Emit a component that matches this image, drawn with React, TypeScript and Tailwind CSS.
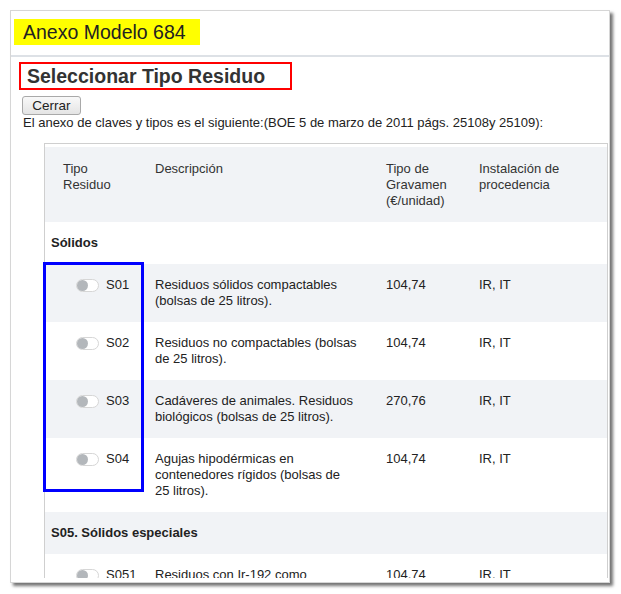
type Row =
  | { kind: "section"; title: string }
  | { kind: "item"; code: string; desc: string[]; rate: string; origin: string };

const rows: Row[] = [
  { kind: "section", title: "Sólidos" },
  { kind: "item", code: "S01", desc: ["Residuos sólidos compactables", "(bolsas de 25 litros)."], rate: "104,74", origin: "IR, IT" },
  { kind: "item", code: "S02", desc: ["Residuos no compactables (bolsas", "de 25 litros)."], rate: "104,74", origin: "IR, IT" },
  { kind: "item", code: "S03", desc: ["Cadáveres de animales. Residuos", "biológicos (bolsas de 25 litros)."], rate: "270,76", origin: "IR, IT" },
  { kind: "item", code: "S04", desc: ["Agujas hipodérmicas en", "contenedores rígidos (bolsas de", "25 litros)."], rate: "104,74", origin: "IR, IT" },
  { kind: "section", title: "S05. Sólidos especiales" },
  { kind: "item", code: "S051", desc: ["Residuos con Ir-192 como", "fuente encapsulada (bolsas de", "25 litros)."], rate: "104,74", origin: "IR, IT" },
];

function Toggle() {
  return (
    <span className="flex items-center w-[23px] h-[13px] rounded-full border border-[#d6d6d6] bg-white">
      <span className="w-[11px] h-[11px] rounded-full bg-[#b3b7bb]" />
    </span>
  );
}

export default function App() {
  return (
    <div className="relative w-[621px] h-[594px] bg-white overflow-hidden font-['Liberation_Sans',Arial,sans-serif] text-[#222]">
      <div className="absolute left-[10px] top-[10px] w-[600px] h-[573px] flex flex-col bg-white border border-[#d6d6d6] pb-[4px] shadow-[3px_3px_3px_rgba(0,0,0,0.55)]">
        {/* cabecera */}
        <div className="h-[46px] shrink-0 border-b-2 border-[#dde1e6]">
          <div className="ml-[3px] mt-[8px] w-[186px] h-[26px] bg-[#ffff00] pl-[9px] text-[19.5px] leading-[26px] text-[#222]">
            Anexo Modelo 684
          </div>
        </div>

        <div className="flex-1 min-h-0 overflow-hidden pl-[8px]">
          <div className="mt-[5px] w-[273px] h-[28px] border-2 border-[#ff0000] pl-[6px] text-[19.5px] leading-[24px] font-bold text-[#333]">
            Seleccionar Tipo Residuo
          </div>
          <button className="mt-[6px] ml-[3px] block w-[59px] h-[19px] rounded-[3px] border border-[#a9a9a9] bg-gradient-to-b from-[#f9f9f9] to-[#e4e4e4] text-[13.5px] leading-[16px] text-[#222]">
            Cerrar
          </button>
          <p className="ml-[4px] text-[13px] leading-[16px] text-[#222]">
            El anexo de claves y tipos es el siguiente:(BOE 5 de marzo de 2011 págs. 25108y 25109):
          </p>

          <div className="mt-[12px] ml-[25px] mr-[1px] border-t border-l border-r border-[#cfcfcf] pt-[3px]">
            <table className="w-full table-fixed border-collapse text-[13px] leading-[16px] text-left">
              <colgroup>
                <col className="w-[100px]" />
                <col className="w-[231px]" />
                <col className="w-[93px]" />
                <col />
              </colgroup>
              <thead>
                <tr className="bg-[#f1f3f6] align-top text-[#333]">
                  <th className="font-normal pl-[18px] pt-[14px] pb-[13px]">Tipo<br />Residuo</th>
                  <th className="font-normal pl-[10px] pt-[14px] pb-[13px]">Descripción</th>
                  <th className="font-normal pl-[10px] pt-[14px] pb-[13px]">Tipo de<br />Gravamen<br />(€/unidad)</th>
                  <th className="font-normal pl-[10px] pt-[14px] pb-[13px]">Instalación de<br />procedencia</th>
                </tr>
              </thead>
              <tbody>
                {rows.map((r, i) => {
                  const bg = i % 2 === 0 ? "bg-white" : "bg-[#f1f3f6]";
                  if (r.kind === "section") {
                    return (
                      <tr key={r.title} className={bg}>
                        <td colSpan={4} className="pl-[6px] py-[13px] font-bold">{r.title}</td>
                      </tr>
                    );
                  }
                  return (
                    <tr key={r.code} className={`${bg} align-top`}>
                      <td className="pl-[31px] py-[13px]">
                        <div className="flex items-center h-[16px] gap-[7px]">
                          <Toggle />
                          <span>{r.code}</span>
                        </div>
                      </td>
                      <td className="pl-[10px] py-[13px]">
                        {r.desc.map((d, j) => (
                          <div key={j} className="whitespace-nowrap">{d}</div>
                        ))}
                      </td>
                      <td className="pl-[10px] py-[13px]">{r.rate}</td>
                      <td className="pl-[10px] py-[13px]">{r.origin}</td>
                    </tr>
                  );
                })}
              </tbody>
            </table>
          </div>
        </div>
      </div>

      {/* marco azul de anotación */}
      <div className="absolute left-[43px] top-[262px] w-[101px] h-[230px] border-[3px] border-[#0000ff]" />
    </div>
  );
}
